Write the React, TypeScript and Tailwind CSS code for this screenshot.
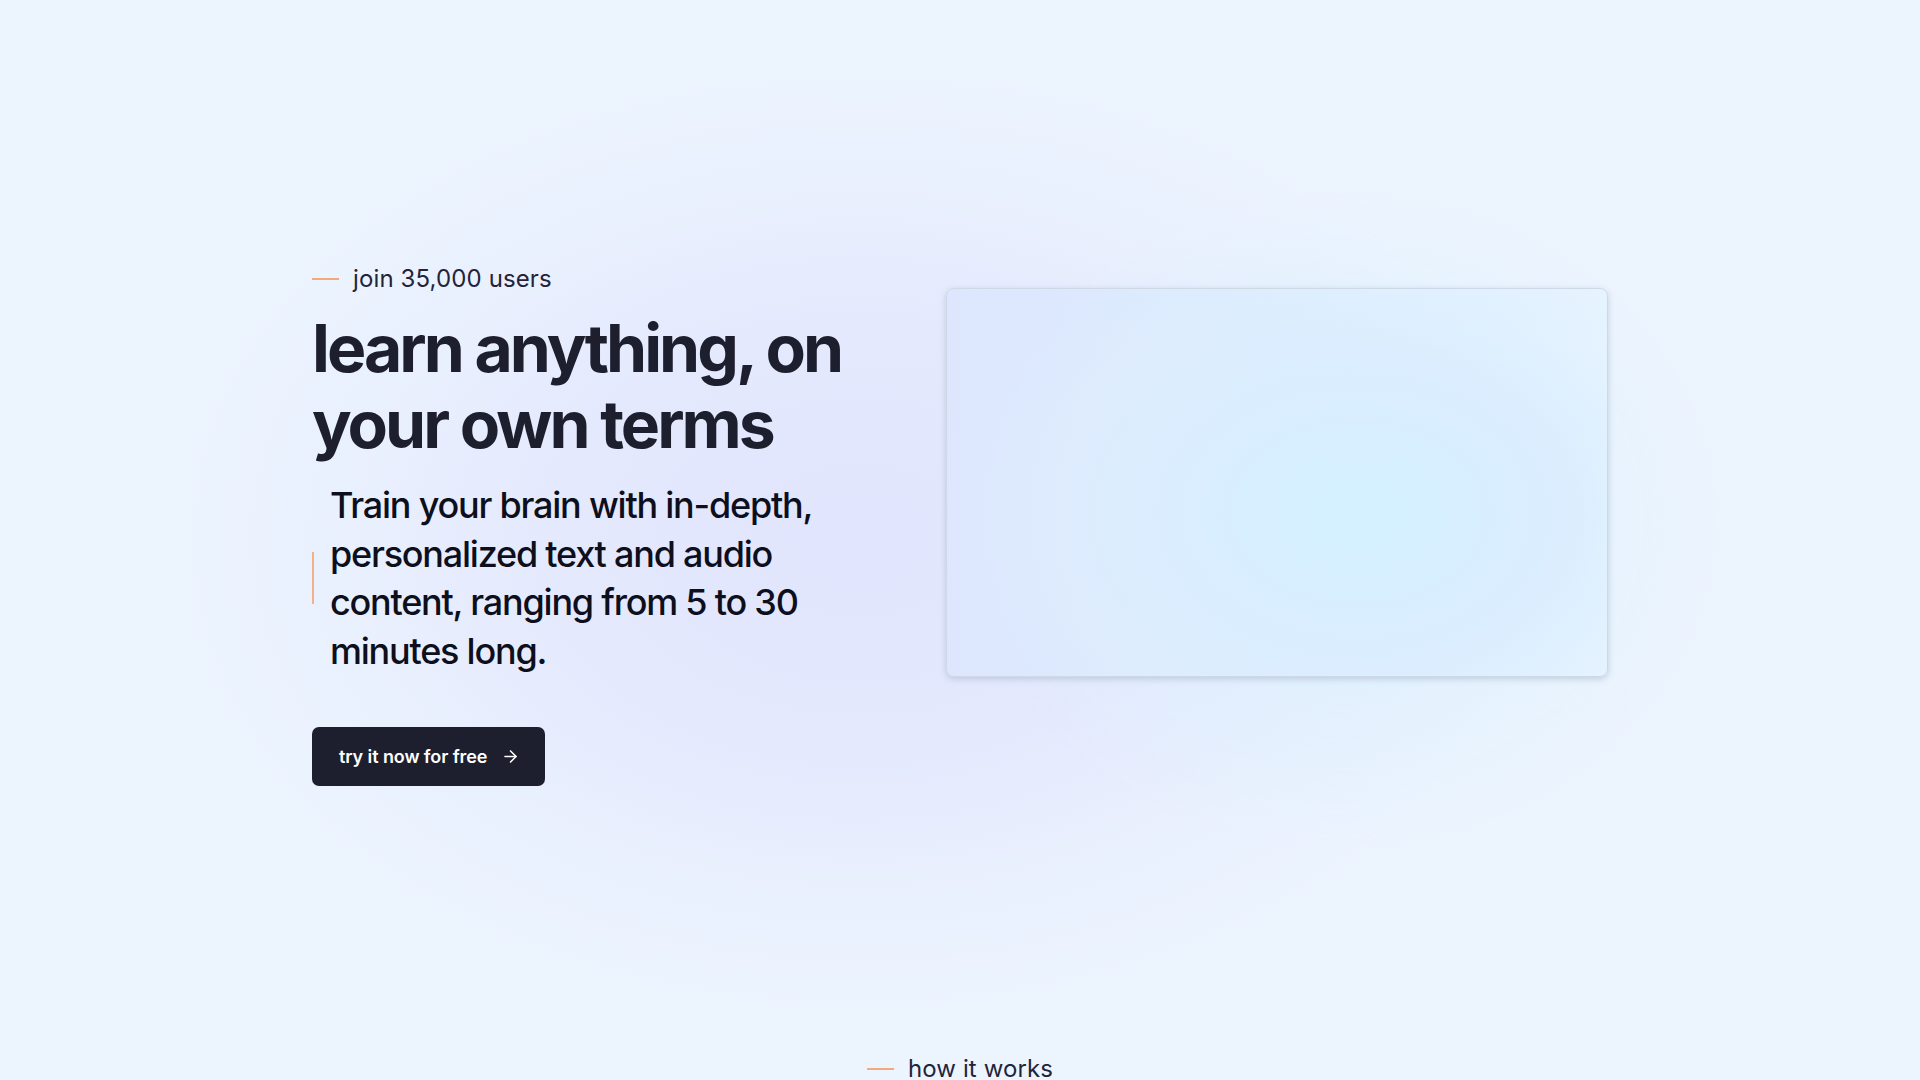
import React from "react";
import { ArrowRight } from "lucide-react";

export default function App() {
  return (
    <div
      className="min-h-screen w-full overflow-hidden bg-[#ecf4fe] bg-[radial-gradient(ellipse_380px_330px_at_1340px_520px,#d6f1fe_0%,rgba(220,240,254,0.5)_55%,rgba(236,244,254,0)_100%),radial-gradient(ellipse_680px_470px_at_860px_540px,#e1e5fd_0%,#e4e9fd_45%,#eaf1fe_80%,rgba(236,244,254,0)_100%)] text-[#1e1f2e]"
      style={{ fontFamily: "Inter, 'Noto Sans', sans-serif" }}
    >
      <section className="mx-auto flex w-[1296px] items-start justify-between pt-[263px]">
        <div className="flex w-[600px] flex-col">
          <div className="flex h-8 items-center gap-[14px]">
            <span className="h-[2px] w-[27px] bg-[#f4a97c]" />
            <span className="text-[24px] leading-8 tracking-[0.005em] text-[#23243a]">
              join 35,000 users
            </span>
          </div>
          <h1 className="mt-[15px] text-[66px] font-bold leading-[76px] tracking-[-0.045em] text-[#1e1f2e]">
            learn anything, on
            <br />
            your own terms
          </h1>
          <div className="mt-[19px] flex items-center gap-[16px]">
            <span className="h-[52px] w-[2px] bg-[#f4b089]" />
            <p className="text-[36px] font-medium leading-[48.6px] tracking-[-0.034em] text-[#0e0f1c]">
              Train your brain with in-depth,
              <br />
              personalized text and audio
              <br />
              content, ranging from 5 to 30
              <br />
              minutes long.
            </p>
          </div>
          <div className="mt-[52px]">
            <button className="flex h-[59px] w-[233px] items-center gap-[14px] rounded-[7px] bg-[#1e1f2e] pl-[27px] text-[18px] font-semibold tracking-[-0.005em] text-white">
              try it now for free
              <ArrowRight size={19} strokeWidth={2} />
            </button>
          </div>
        </div>
        <div className="mt-[25px] h-[389px] w-[662px] rounded-lg border border-[#cfd9e6] bg-[radial-gradient(ellipse_420px_300px_at_62%_58%,#d4f1fe_0%,#daedfe_45%,rgba(224,240,254,0.4)_75%,rgba(230,243,254,0)_100%),linear-gradient(90deg,#dde6fd_0%,#dbecfe_50%,#e6f4fe_100%)] shadow-[0_2px_6px_rgba(120,140,170,0.35)]" />
      </section>
      <section className="mt-[267px] flex items-center justify-center gap-[14px] pb-[200px]">
        <span className="h-[2px] w-[27px] bg-[#f4a97c]" />
        <span className="text-[24px] leading-8 tracking-[0.005em] text-[#23243a]">how it works</span>
      </section>
    </div>
  );
}
